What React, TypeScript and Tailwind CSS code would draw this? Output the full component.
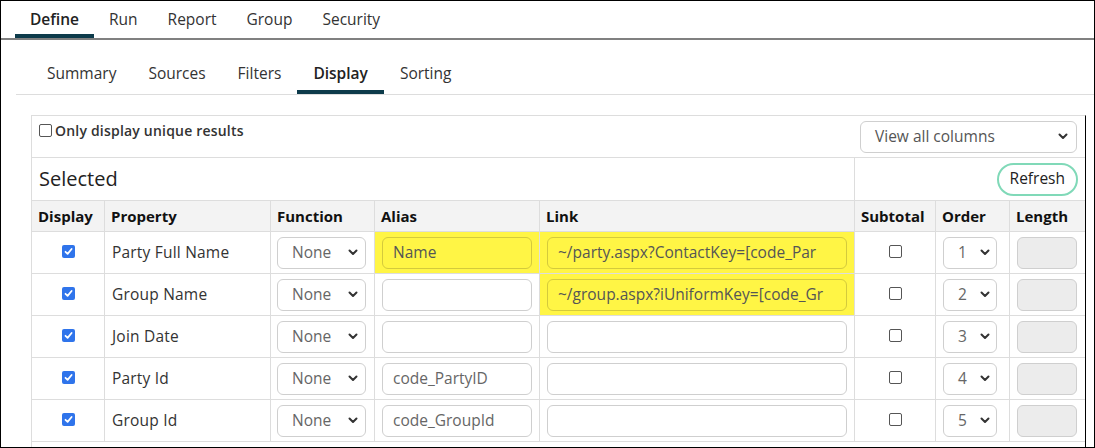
import React from 'react';

const rows = [
  { name: 'Party Full Name', alias: 'Name', link: '~/party.aspx?ContactKey=[code_Par', order: '1', hlAlias: true, hlLink: true },
  { name: 'Group Name', alias: '', link: '~/group.aspx?iUniformKey=[code_Gr', order: '2', hlAlias: false, hlLink: true },
  { name: 'Join Date', alias: '', link: '', order: '3', hlAlias: false, hlLink: false },
  { name: 'Party Id', alias: 'code_PartyID', link: '', order: '4', hlAlias: false, hlLink: false },
  { name: 'Group Id', alias: 'code_GroupId', link: '', order: '5', hlAlias: false, hlLink: false },
];

function Chevron() {
  return (
    <svg width="10" height="7" viewBox="0 0 10 7" className="shrink-0">
      <path d="M1.5 1.5 L5 5 L8.5 1.5" fill="none" stroke="#333" strokeWidth="2" strokeLinecap="round" strokeLinejoin="round" />
    </svg>
  );
}

function Checked() {
  return (
    <span className="inline-flex w-[13px] h-[13px] rounded-[2px] bg-[#2f74eb] items-center justify-center">
      <svg width="9" height="9" viewBox="0 0 9 9">
        <path d="M1.5 4.8 L3.6 6.8 L7.6 2" fill="none" stroke="#fff" strokeWidth="1.8" strokeLinecap="round" strokeLinejoin="round" />
      </svg>
    </span>
  );
}

function Unchecked() {
  return <span className="inline-block w-[13px] h-[13px] rounded-[2px] border border-[#555] bg-white" />;
}

function FakeSelect({ value, className }: { value: string; className: string }) {
  return (
    <div className={`h-[32px] rounded-[6px] border border-[#cfcfcf] bg-white flex items-center justify-between text-[15.5px] text-[#666] ${className}`}>
      <span>{value}</span>
      <Chevron />
    </div>
  );
}

function TextBox({ value, hl, className }: { value: string; hl?: boolean; className: string }) {
  return (
    <div
      className={`h-[32px] rounded-[6px] border flex items-center px-[10px] text-[15.5px] whitespace-nowrap overflow-hidden ${
        hl ? 'bg-[#fff545] border-[#d4ca3c] text-[#555]' : 'bg-white border-[#cfcfcf] text-[#666]'
      } ${className}`}
    >
      {value}
    </div>
  );
}

export default function App() {
  const top = ['Define', 'Run', 'Report', 'Group', 'Security'];
  const sub = ['Summary', 'Sources', 'Filters', 'Display', 'Sorting'];
  const th = 'h-[31px] border-t border-l first:border-l-0 border-[#dddddd] pl-[6px] pr-[4px] text-left text-[15px] font-bold text-[#111]';
  const td = 'h-[42px] border-t border-l first:border-l-0 border-[#dddddd] px-[6px]';

  return (
    <div className="w-[1095px] h-[448px] border border-black bg-white overflow-hidden font-['Open_Sans',sans-serif] text-[#333]">
      <div className="flex h-[39px] px-[14px] border-b-2 border-[#808080]">
        {top.map((t) => (
          <div
            key={t}
            className={`px-[15px] flex items-center border-b-4 text-[15.5px] pt-[4px] ${
              t === 'Define' ? 'border-[#0d3b4b] font-semibold text-[#222]' : 'border-transparent text-[#333]'
            }`}
          >
            {t}
          </div>
        ))}
      </div>

      <div className="ml-[15px] mt-[15px] flex h-[40px] px-[15px] border-b border-[#dddddd]">
        {sub.map((t) => (
          <div
            key={t}
            className={`px-[16px] flex items-center border-b-4 text-[15.5px] pt-[2px] ${
              t === 'Display' ? 'border-[#0d3b4b] font-semibold text-[#222]' : 'border-transparent text-[#333]'
            }`}
          >
            {t}
          </div>
        ))}
      </div>

      <div className="ml-[30px] mt-[20px] w-[1055px] border border-[#dddddd] border-r-black">
        <div className="h-[41px] flex items-center justify-between pl-[7px] pr-[8px]">
          <label className="flex items-center gap-[3px] self-start pt-[4px] text-[14px] font-semibold tracking-[0.2px] text-[#333]">
            <Unchecked />
            Only display unique results
          </label>
          <div className="w-[217px] h-[32px] rounded-[6px] border border-[#cfcfcf] flex items-center justify-between pl-[14px] pr-[8px] text-[15.5px] text-[#555]">
            <span>View all columns</span>
            <Chevron />
          </div>
        </div>

        <div className="h-[43px] flex border-t border-[#dddddd]">
          <div className="w-[822px] flex items-center pl-[7px] text-[20px] text-[#222]">Selected</div>
          <div className="flex-1 border-l border-[#dddddd] flex items-center justify-end pr-[7px]">
            <button className="h-[33px] px-[11px] rounded-full border-2 border-[#80d9b8] text-[15.5px] text-[#222]">Refresh</button>
          </div>
        </div>

        <table className="w-full table-fixed border-separate border-spacing-0">
          <colgroup>
            <col className="w-[72px]" />
            <col className="w-[166px]" />
            <col className="w-[104px]" />
            <col className="w-[165px]" />
            <col className="w-[315px]" />
            <col className="w-[81px]" />
            <col className="w-[74px]" />
            <col className="w-[76px]" />
          </colgroup>
          <thead>
            <tr className="bg-[#f3f3f3]">
              <th className={th}>Display</th>
              <th className={th}>Property</th>
              <th className={th}>Function</th>
              <th className={th}>Alias</th>
              <th className={th}>Link</th>
              <th className={th}>Subtotal</th>
              <th className={th}>Order</th>
              <th className={th}>Length</th>
            </tr>
          </thead>
          <tbody>
            {rows.map((r) => (
              <tr key={r.name}>
                <td className={td}>
                  <div className="flex justify-center items-center pb-[2px]"><Checked /></div>
                </td>
                <td className={`${td} pl-[7px] text-[15.5px] tracking-[0.2px] text-[#333]`}>{r.name}</td>
                <td className={`${td} pl-[6px]`}>
                  <FakeSelect value="None" className="w-[89px] pl-[14px] pr-[7px]" />
                </td>
                <td className={`${td} pl-[7px] ${r.hlAlias ? 'bg-[#fff545]' : ''}`}>
                  <TextBox value={r.alias} hl={r.hlAlias} className="w-[150px]" />
                </td>
                <td className={`${td} pl-[7px] ${r.hlLink ? 'bg-[#fff545]' : ''}`}>
                  <TextBox value={r.link} hl={r.hlLink} className="w-[300px]" />
                </td>
                <td className={td}>
                  <div className="flex justify-center items-center pb-[2px]"><Unchecked /></div>
                </td>
                <td className={`${td} pl-[7px]`}>
                  <FakeSelect value={r.order} className="w-[54px] pl-[14px] pr-[6px]" />
                </td>
                <td className={`${td} pl-[7px]`}>
                  <div className="w-[60px] h-[32px] rounded-[6px] border border-[#cfcfcf] bg-[#ececec]" />
                </td>
              </tr>
            ))}
            <tr>
              <td className={td} colSpan={8} />
            </tr>
          </tbody>
        </table>
      </div>
    </div>
  );
}
